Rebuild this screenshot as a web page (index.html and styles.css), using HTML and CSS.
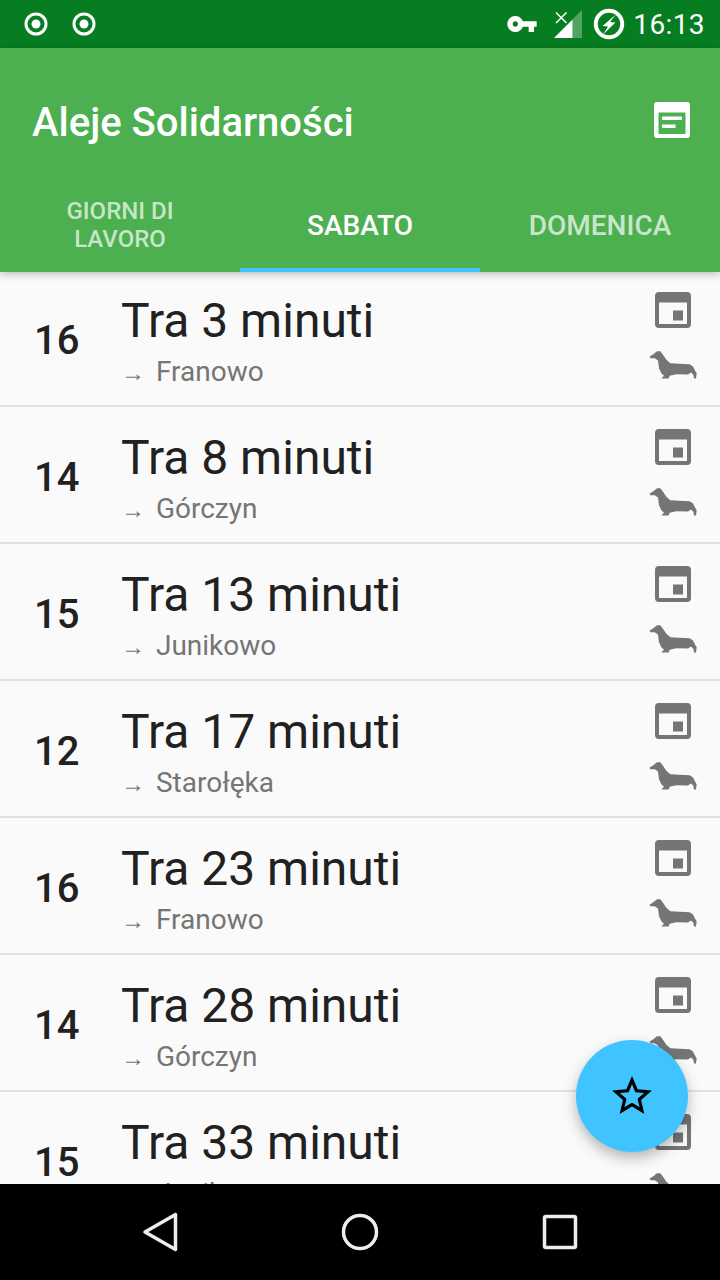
FILE: index.html
```html
<!DOCTYPE html>
<html lang="en">
<head>
    <meta charset="UTF-8">
    <meta name="viewport" content="width=device-width, initial-scale=1.0">
    <title>Aleje Solidarności</title>
    <link rel="stylesheet" href="styles.css">
</head>
<body>
    <svg class="defs" width="0" height="0">
        <symbol id="calendar" viewBox="0 0 36 36">
            <path fill-rule="evenodd" d="M4 0h28a4 4 0 0 1 4 4v28a4 4 0 0 1-4 4H4a4 4 0 0 1-4-4V4a4 4 0 0 1 4-4zM4 10.500v21.500h28V10.500z"/>
            <rect x="18" y="18.500" width="10" height="10"/>
        </symbol>
        <symbol id="dog" viewBox="85 205 150 95">
            <path d="M90 230 L100 224 L112 214 L122 214 L130 225 L140 240 L152 250 L180 252 L210 253 L220 260 L226 272 L231 280 L229 296 L223 296 L221 285 L214 278 L205 284 L170 283 L150 288 L147 296 L125 296 L133 288 L125 280 L118 265 L115 242 L105 235 L92 235 Z"/>
        </symbol>
    </svg>

    <div class="screen">
        <div class="status-bar">
            <svg class="status-radio" width="32" height="32" viewBox="0 0 32 32"><circle cx="16" cy="16" r="10" fill="none" stroke="#fff" stroke-width="3"/><circle cx="16" cy="16" r="4.500" fill="#fff"/></svg>
            <svg class="status-radio" width="32" height="32" viewBox="0 0 32 32"><circle cx="16" cy="16" r="10" fill="none" stroke="#fff" stroke-width="3"/><circle cx="16" cy="16" r="4.500" fill="#fff"/></svg>
            <div class="status-right">
                <svg class="status-key" width="32" height="32" viewBox="0 0 24 24"><path fill="#fff" d="M12.650 10C11.830 7.670 9.610 6 7 6c-3.310 0-6 2.690-6 6s2.690 6 6 6c2.610 0 4.830-1.670 5.650-4H17v4h4v-4h2v-4H12.650zM7 14c-1.100 0-2-.9-2-2s.9-2 2-2 2 .9 2 2-.9 2-2 2z"/></svg>
                <svg class="status-signal" width="28" height="28" viewBox="0 0 28 28">
                    <path fill="#fff" d="M0 28 L18.500 9.500 V28 Z"/>
                    <path fill="#fff" opacity=".3" d="M18.500 9.500 L28 0 V28 H18.500 Z"/>
                    <path stroke="#fff" stroke-width="1.500" d="M2 2.500 L12.500 13 M12.500 2.500 L2 13"/>
                </svg>
                <svg class="status-charge" width="32" height="32" viewBox="0 0 32 32">
                    <circle cx="16" cy="16" r="13.200" fill="none" stroke="#fff" stroke-width="4"/>
                    <path fill="#fff" d="M23 6.500 L9.500 18 L15 18.500 L10 26.500 L22.500 14.500 L17 14 Z"/>
                </svg>
                <span class="status-time">16:13</span>
            </div>
        </div>

        <div class="app-bar">
            <div class="toolbar">
                <span class="toolbar-title">Aleje Solidarności</span>
                <svg class="toolbar-icon" width="36" height="36" viewBox="0 0 36 36">
                    <path fill="#fff" fill-rule="evenodd" d="M3 0h30a3 3 0 0 1 3 3v30a3 3 0 0 1-3 3H3a3 3 0 0 1-3-3V3a3 3 0 0 1 3-3zM4.500 10.500v21.500h27V10.500zM8 14.500h20v3.500H8zM8 22.500h13.500v3.500H8z"/>
                </svg>
            </div>
            <div class="tabs">
                <div class="tab tab-small">Giorni di<br>lavoro</div>
                <div class="tab tab-active">Sabato</div>
                <div class="tab">Domenica</div>
            </div>
        </div>

        <div class="list">
            <div class="row">
                <div class="row-num">16</div>
                <div class="row-text"><div class="row-title">Tra 3 minuti</div><div class="row-sub"><span class="arrow">→</span> Franowo</div></div>
                <div class="row-icons"><svg class="icon-cal"><use href="#calendar"/></svg><svg class="icon-dog"><use href="#dog"/></svg></div>
            </div>
            <div class="row">
                <div class="row-num">14</div>
                <div class="row-text"><div class="row-title">Tra 8 minuti</div><div class="row-sub"><span class="arrow">→</span> Górczyn</div></div>
                <div class="row-icons"><svg class="icon-cal"><use href="#calendar"/></svg><svg class="icon-dog"><use href="#dog"/></svg></div>
            </div>
            <div class="row">
                <div class="row-num">15</div>
                <div class="row-text"><div class="row-title">Tra 13 minuti</div><div class="row-sub"><span class="arrow">→</span> Junikowo</div></div>
                <div class="row-icons"><svg class="icon-cal"><use href="#calendar"/></svg><svg class="icon-dog"><use href="#dog"/></svg></div>
            </div>
            <div class="row">
                <div class="row-num">12</div>
                <div class="row-text"><div class="row-title">Tra 17 minuti</div><div class="row-sub"><span class="arrow">→</span> Starołęka</div></div>
                <div class="row-icons"><svg class="icon-cal"><use href="#calendar"/></svg><svg class="icon-dog"><use href="#dog"/></svg></div>
            </div>
            <div class="row">
                <div class="row-num">16</div>
                <div class="row-text"><div class="row-title">Tra 23 minuti</div><div class="row-sub"><span class="arrow">→</span> Franowo</div></div>
                <div class="row-icons"><svg class="icon-cal"><use href="#calendar"/></svg><svg class="icon-dog"><use href="#dog"/></svg></div>
            </div>
            <div class="row">
                <div class="row-num">14</div>
                <div class="row-text"><div class="row-title">Tra 28 minuti</div><div class="row-sub"><span class="arrow">→</span> Górczyn</div></div>
                <div class="row-icons"><svg class="icon-cal"><use href="#calendar"/></svg><svg class="icon-dog"><use href="#dog"/></svg></div>
            </div>
            <div class="row">
                <div class="row-num">15</div>
                <div class="row-text"><div class="row-title">Tra 33 minuti</div><div class="row-sub"><span class="arrow">→</span> Junikowo</div></div>
                <div class="row-icons"><svg class="icon-cal"><use href="#calendar"/></svg><svg class="icon-dog"><use href="#dog"/></svg></div>
            </div>
        </div>

        <div class="fab">
            <svg width="48" height="48" viewBox="0 0 24 24"><path d="M22 9.240l-7.190-.62L12 2 9.190 8.630 2 9.240l5.460 4.730L5.820 21 12 17.270 18.180 21l-1.630-7.030L22 9.240zM12 15.400l-3.760 2.270 1-4.280-3.320-2.880 4.380-.38L12 6.100l1.710 4.040 4.380.38-3.320 2.880 1 4.280L12 15.400z"/></svg>
        </div>

        <div class="nav-bar">
            <div class="nav-btn"><svg width="36" height="40" viewBox="0 0 36 40"><path fill="none" stroke="#eee" stroke-width="3.500" stroke-linejoin="round" d="M3 20 L33.500 2.500 V37.500 Z"/></svg></div>
            <div class="nav-btn"><svg width="40" height="40" viewBox="0 0 40 40"><circle cx="20" cy="20" r="16.500" fill="none" stroke="#eee" stroke-width="3.500"/></svg></div>
            <div class="nav-btn"><svg width="36" height="36" viewBox="0 0 36 36"><rect x="2.500" y="2.500" width="31" height="31" rx="1.500" fill="none" stroke="#eee" stroke-width="3.500"/></svg></div>
        </div>
    </div>
</body>
</html>
```

FILE: styles.css
```css
* {
    box-sizing: border-box;
}
body {
    margin: 0;
    font-family: Roboto, sans-serif;
    background: #fafafa;
}
.defs {
    position: absolute;
}
.screen {
    position: relative;
    width: 720px;
    height: 1280px;
    display: flex;
    flex-direction: column;
    overflow: hidden;
}

/* status bar */
.status-bar {
    height: 48px;
    flex-shrink: 0;
    display: flex;
    align-items: center;
    gap: 16px;
    padding: 0 15px 0 20px;
    background: #077d22;
}
.status-right {
    margin-left: auto;
    display: flex;
    align-items: center;
}
.status-key {
    margin-right: 16px;
}
.status-signal {
    margin-right: 11px;
}
.status-charge {
    margin-right: 8px;
}
.status-time {
    color: #fff;
    font-size: 28px;
    letter-spacing: 0.4px;
}

/* app bar and tabs */
.app-bar {
    position: relative;
    z-index: 1;
    flex-shrink: 0;
    background: #4caf50;
    box-shadow: 0 2px 8px rgba(0, 0, 0, 0.25);
}
.toolbar {
    height: 128px;
    display: flex;
    align-items: center;
    justify-content: space-between;
    padding: 16px 30px 0 32px;
}
.toolbar-title {
    margin-top: 4px;
    color: #fff;
    font-size: 40px;
    font-weight: 500;
}
.tabs {
    height: 96px;
    display: flex;
}
.tab {
    position: relative;
    width: 240px;
    display: flex;
    align-items: center;
    justify-content: center;
    padding-top: 4px;
    text-align: center;
    color: rgba(255, 255, 255, 0.7);
    font-size: 28px;
    line-height: 28px;
    font-weight: 500;
    text-transform: uppercase;
}
.tab-small {
    padding-top: 2px;
    font-size: 24px;
}
.tab-active {
    color: #fff;
}
.tab-active::after {
    content: "";
    position: absolute;
    left: 0;
    right: 0;
    bottom: 0;
    height: 4px;
    background: #40c4ff;
}

/* list */
.list {
    flex: 1;
    margin-top: -2px;
    overflow: hidden;
}
.row {
    height: 137px;
    display: flex;
    align-items: center;
    padding: 0 22px 0 34px;
    border-bottom: 2px solid #e0e0e0;
}
.row-num {
    width: 87px;
    padding-top: 6px;
    color: #212121;
    font-size: 40px;
    font-weight: 500;
}
.row-text {
    flex: 1;
    padding-top: 11px;
}
.row-title {
    color: #212121;
    font-size: 48px;
    line-height: 56px;
}
.row-sub {
    margin-top: 3px;
    color: #757575;
    font-size: 28px;
    line-height: 40px;
}
.arrow {
    margin-right: 4px;
    font-size: 24px;
}
.row-icons {
    width: 50px;
    margin-bottom: 3px;
    display: flex;
    flex-direction: column;
    align-items: center;
    gap: 20px;
    fill: #757575;
}
.icon-cal {
    width: 36px;
    height: 36px;
}
.icon-dog {
    width: 50px;
    height: 32px;
}

/* floating button */
.fab {
    position: absolute;
    left: 576px;
    top: 1040px;
    width: 112px;
    height: 112px;
    display: flex;
    align-items: center;
    justify-content: center;
    border-radius: 50%;
    background: #40c4ff;
    box-shadow: 0 6px 14px rgba(0, 0, 0, 0.28);
}

/* navigation bar */
.nav-bar {
    height: 96px;
    flex-shrink: 0;
    display: flex;
    justify-content: center;
    align-items: center;
    background: #000;
}
.nav-btn {
    width: 200px;
    display: flex;
    justify-content: center;
}
```
